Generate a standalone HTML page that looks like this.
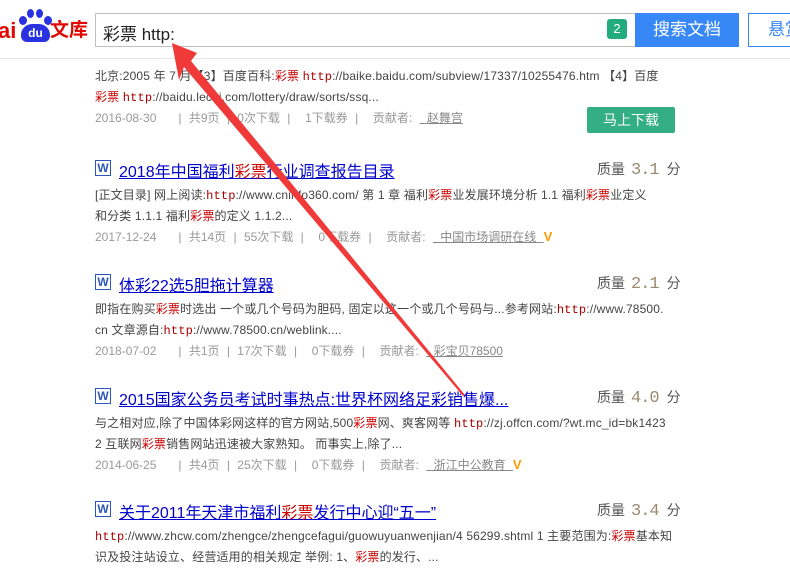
<!DOCTYPE html>
<html><head><meta charset="utf-8"><style>
*{margin:0;padding:0;box-sizing:border-box}
body{width:790px;height:573px;overflow:hidden;background:#fff;font-family:"Liberation Sans","Noto Sans CJK SC",sans-serif;position:relative;color:#333}
.a{position:absolute;white-space:nowrap}
.t{font-size:16px;color:#0000cc;text-decoration:underline;left:119px}
.t b{color:#c00;font-weight:normal}
.b{font-size:12px;color:#444;left:95px;letter-spacing:0.15px}
.b i{font-style:normal;color:#c00}
.h{font-family:"Liberation Mono",monospace;color:#a00}
.m{font-size:12px;color:#999;left:95px;word-spacing:4px}
.m u{color:#888}
.w{left:95px;width:16px;height:16px;border:1px solid #2b58b8;color:#2b58b8;font:bold 12px "Liberation Sans",sans-serif;text-align:center;line-height:14px}
.q{left:597px;font-size:14px;color:#555}
.q span{font-size:17px;color:#9a8a70;margin:0 8px 0 6px;font-family:"Liberation Mono",monospace;letter-spacing:-1px}
.v{color:#f90;font-weight:bold;font-size:13px}
</style></head><body>
<div class="a" style="left:-2px;top:18px;font:bold 22px 'Liberation Sans';color:#e10602">ai</div>
<div class="a" style="left:19px;top:9px;width:32px;height:16px">
<span style="position:absolute;left:0;top:7px;width:8px;height:9px;background:#2932e1;border-radius:50%"></span>
<span style="position:absolute;left:8px;top:0;width:7px;height:9px;background:#2932e1;border-radius:50%"></span>
<span style="position:absolute;left:17px;top:0;width:7px;height:9px;background:#2932e1;border-radius:50%"></span>
<span style="position:absolute;left:25px;top:7px;width:8px;height:9px;background:#2932e1;border-radius:50%"></span></div>
<div class="a" style="left:21px;top:24px;width:29px;height:18px;background:#2932e1;border-radius:11px 11px 6px 6px;color:#fff;font:bold 12px 'Liberation Sans';text-align:center;line-height:18px">du</div>
<div class="a" style="left:50px;top:18px;font:bold 19px 'Noto Sans CJK SC';color:#e10602;line-height:22px">文库</div>
<div class="a" style="left:95px;top:13px;width:541px;height:34px;border:1px solid #c0c0c0;border-right:none"></div>
<div class="a" style="left:103px;top:20px;font-size:17px;color:#222">彩票 http:</div>
<div class="a" style="left:607px;top:19px;width:20px;height:20px;background:#22ab7c;border-radius:3px;color:#fff;font-size:13px;text-align:center;line-height:20px">2</div>
<div class="a" style="left:635px;top:13px;width:104px;height:34px;background:#3887f7;color:#fff;font-size:17px;text-align:center;line-height:34px">搜索文档</div>
<div class="a" style="left:748px;top:13px;width:60px;height:34px;border:1px solid #3887f7;color:#3887f7;font-size:17px;line-height:32px;padding-left:19px">悬赏</div>
<div class="a" style="left:0;top:58px;width:790px;height:1px;background:#e6e6e6"></div>

<div class="a b" style="top:67px">北京:2005 年 7 月【3】百度百科:<i>彩票</i> <span class="h">http</span>://baike.baidu.com/subview/17337/10255476.htm 【4】百度</div>
<div class="a b" style="top:88px"><i>彩票</i> <span class="h">http</span>://baidu.lecai.com/lottery/draw/sorts/ssq...</div>
<div class="a m" style="top:109px">2016-08-30 &nbsp;&nbsp;| 共9页 | 0次下载 | &nbsp;1下载券 | &nbsp;贡献者: <u>&nbsp;赵舞宫</u></div>
<div class="a" style="left:587px;top:107px;width:88px;height:26px;background:#34ae84;color:#fff;font-size:14px;text-align:center;line-height:26px;border-radius:2px">马上下载</div>

<div class="a w" style="top:160px">W</div>
<div class="a t" style="top:158px">2018年中国福利<b>彩票</b>行业调查报告目录</div>
<div class="a q" style="top:159px">质量<span>3.1</span>分</div>
<div class="a b" style="top:186px">[正文目录] 网上阅读:<span class="h">http</span>://www.cninfo360.com/ 第 1 章 福利<i>彩票</i>业发展环境分析 1.1 福利<i>彩票</i>业定义</div>
<div class="a b" style="top:207px">和分类 1.1.1 福利<i>彩票</i>的定义 1.1.2...</div>
<div class="a m" style="top:228px">2017-12-24 &nbsp;&nbsp;| 共14页 | 55次下载 | &nbsp;0下载券 | &nbsp;贡献者: <u>&nbsp;中国市场调研在线&nbsp;</u><span class="v">V</span></div>

<div class="a w" style="top:274px">W</div>
<div class="a t" style="top:272px">体彩22选5胆拖计算器</div>
<div class="a q" style="top:273px">质量<span>2.1</span>分</div>
<div class="a b" style="top:300px">即指在购买<i>彩票</i>时选出 一个或几个号码为胆码, 固定以这一个或几个号码与...参考网站:<span class="h">http</span>://www.78500.</div>
<div class="a b" style="top:321px">cn 文章源自:<span class="h">http</span>://www.78500.cn/weblink....</div>
<div class="a m" style="top:342px">2018-07-02 &nbsp;&nbsp;| 共1页 | 17次下载 | &nbsp;0下载券 | &nbsp;贡献者: <u>&nbsp;彩宝贝78500</u></div>

<div class="a w" style="top:388px">W</div>
<div class="a t" style="top:386px">2015国家公务员考试时事热点:世界杯网络足彩销售爆...</div>
<div class="a q" style="top:387px">质量<span>4.0</span>分</div>
<div class="a b" style="top:414px">与之相对应,除了中国体彩网这样的官方网站,500<i>彩票</i>网、爽客网等 <span class="h">http</span>://zj.offcn.com/?wt.mc_id=bk1423</div>
<div class="a b" style="top:435px">2 互联网<i>彩票</i>销售网站迅速被大家熟知。 而事实上,除了...</div>
<div class="a m" style="top:456px">2014-06-25 &nbsp;&nbsp;| 共4页 | 25次下载 | &nbsp;0下载券 | &nbsp;贡献者: <u>&nbsp;浙江中公教育&nbsp;</u><span class="v">V</span></div>

<div class="a w" style="top:501px">W</div>
<div class="a t" style="top:499px">关于2011年天津市福利<b>彩票</b>发行中心迎“五一”</div>
<div class="a q" style="top:500px">质量<span>3.4</span>分</div>
<div class="a b" style="top:527px"><span class="h">http</span>://www.zhcw.com/zhengce/zhengcefagui/guowuyuanwenjian/4 56299.shtml 1 主要范围为:<i>彩票</i>基本知</div>
<div class="a b" style="top:548px">识及投注站设立、经营适用的相关规定 举例: 1、<i>彩票</i>的发行、...</div>

<svg class="a" style="left:0;top:0" width="790" height="573"><polygon points="172,43 197,53 191,61 465,395 463,396 184,67 179,80" fill="#f03a3a"/></svg>
</body></html>
